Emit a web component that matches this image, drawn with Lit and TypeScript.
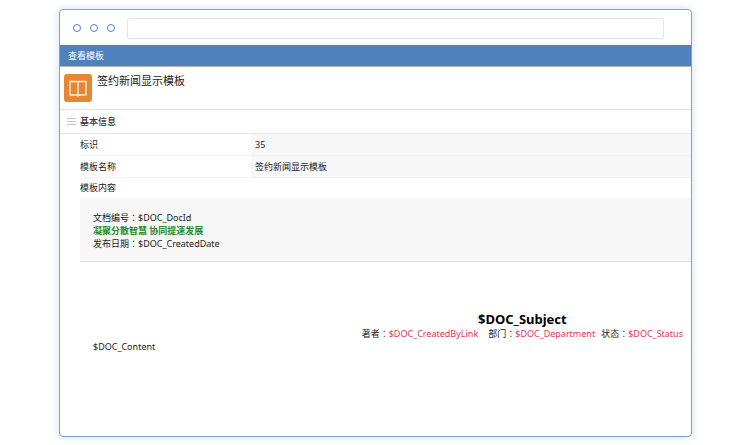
import { LitElement, html, css } from "lit";
import { customElement } from "lit/decorators.js";

const colon = html`<span class="colon">：</span>`;

@customElement("app-root")
export class AppRoot extends LitElement {
  static styles = css`
    :host {
      display: flex;
      box-sizing: border-box;
      min-height: 100vh;
      padding: 9px 58px 8px 59px;
      background: #fff;
      color: #222;
      font: 9px/13px "Noto Sans", "Noto Sans CJK SC", sans-serif;
    }
    .window {
      flex: 1;
      min-width: 0;
      border: 1px solid #7f9fd6;
      border-radius: 4px;
      overflow: hidden;
      box-shadow: 0 0 10px #d3e1f2;
    }
    .chrome {
      display: flex;
      align-items: center;
      height: 35px;
      padding: 0 27px 0 13px;
    }
    .dots {
      display: flex;
      gap: 9px;
      margin-right: 12px;
    }
    .dot {
      box-sizing: border-box;
      width: 8px;
      height: 8px;
      border: 1px solid #4f7fc6;
      border-radius: 50%;
    }
    .address {
      flex: 1;
      min-width: 0;
      box-sizing: border-box;
      height: 21px;
      margin: 2px 0 0;
      padding: 0 6px;
      border: 1px solid #dde5f3;
      border-radius: 2px;
      background: #fff;
      font: inherit;
      outline: none;
    }
    .bar {
      padding: 0 8px;
      background: #4f81bd;
      border-bottom: 1px solid #b5b5b5;
      color: #fff;
      line-height: 21px;
    }
    .heading {
      display: flex;
      gap: 5px;
      height: 35px;
      padding: 7px 4px 0;
      border-bottom: 1px solid #e3e3e3;
    }
    .book {
      width: 28px;
      height: 28px;
    }
    h1 {
      margin: 0;
      font-size: 11px;
      line-height: 13px;
      font-weight: 400;
    }
    .section {
      display: flex;
      align-items: center;
      gap: 4px;
      margin: 0;
      padding: 0 7px;
      border-bottom: 1px solid #e8e8e8;
      color: #333;
      font-size: 9px;
      font-weight: 500;
      line-height: 23px;
    }
    .lines {
      width: 9px;
      height: 9px;
    }
    .details {
      margin-left: 20px;
    }
    table {
      width: 100%;
      border-collapse: collapse;
      table-layout: fixed;
    }
    th,
    td {
      padding: 0;
      border-bottom: 1px solid #f2f2f2;
      line-height: 21px;
      font-weight: 400;
      text-align: left;
    }
    th {
      width: 28%;
    }
    td {
      padding-left: 4px;
      background: #f7f7f7;
    }
    .caption {
      line-height: 20px;
    }
    .summary {
      padding: 13px 13px 11px;
      background: #f7f7f7;
      border-bottom: 1px solid #dedede;
    }
    .summary p,
    .content {
      margin: 0;
    }
    .summary .slogan {
      color: #2c8a2c;
      font-weight: 700;
    }
    .colon {
      font-family: "Noto Sans CJK TC", sans-serif;
    }
    .document {
      display: flex;
      flex-direction: column;
      padding: 49px 8px 0 13px;
    }
    .subject {
      align-self: flex-end;
      text-align: center;
    }
    h3 {
      margin: 0;
      color: #000;
      font-size: 13px;
      line-height: 16px;
      font-weight: 700;
    }
    .meta {
      display: flex;
      line-height: 13px;
    }
    .author {
      margin-right: 10px;
    }
    .department {
      margin-right: 6px;
    }
    .field {
      color: #dc3558;
    }
  `;

  render() {
    return html`
      <main class="window">
        <div class="chrome">
          <div class="dots">
            <span class="dot"></span><span class="dot"></span><span class="dot"></span>
          </div>
          <input class="address" type="text" aria-label="地址" />
        </div>
        <div class="bar">查看模板</div>
        <header class="heading">
          <svg class="book" viewBox="0 0 28 28" aria-hidden="true">
            <rect width="28" height="28" rx="3" fill="#e68734" />
            <path
              d="M6 7.500H13L14 8.500L15 7.500H22V21H15L14 22L13 21H6ZM14 8.500V22"
              fill="none"
              stroke="#fdf3e8"
              stroke-width="1.300"
            />
          </svg>
          <h1>签约新闻显示模板</h1>
        </header>
        <h2 class="section">
          <svg class="lines" viewBox="0 0 9 9" aria-hidden="true">
            <path d="M0 1.500H9M0 4.500H9M0 7.500H9" stroke="#c4c4c4" />
          </svg>
          基本信息
        </h2>
        <section class="details">
          <table>
            <tr>
              <th scope="row">标识</th>
              <td>35</td>
            </tr>
            <tr>
              <th scope="row">模板名称</th>
              <td>签约新闻显示模板</td>
            </tr>
          </table>
          <div class="caption">模板内容</div>
          <div class="summary">
            <p>文档编号${colon}$DOC_DocId</p>
            <p class="slogan">凝聚分散智慧 协同提速发展</p>
            <p>发布日期${colon}$DOC_CreatedDate</p>
          </div>
          <article class="document">
            <div class="subject">
              <h3>$DOC_Subject</h3>
              <div class="meta">
                <span class="author">著者${colon}<span class="field">$DOC_CreatedByLink</span></span>
                <span class="department">部门${colon}<span class="field">$DOC_Department</span></span>
                <span>状态${colon}<span class="field">$DOC_Status</span></span>
              </div>
            </div>
            <p class="content">$DOC_Content</p>
          </article>
        </section>
      </main>
    `;
  }
}
